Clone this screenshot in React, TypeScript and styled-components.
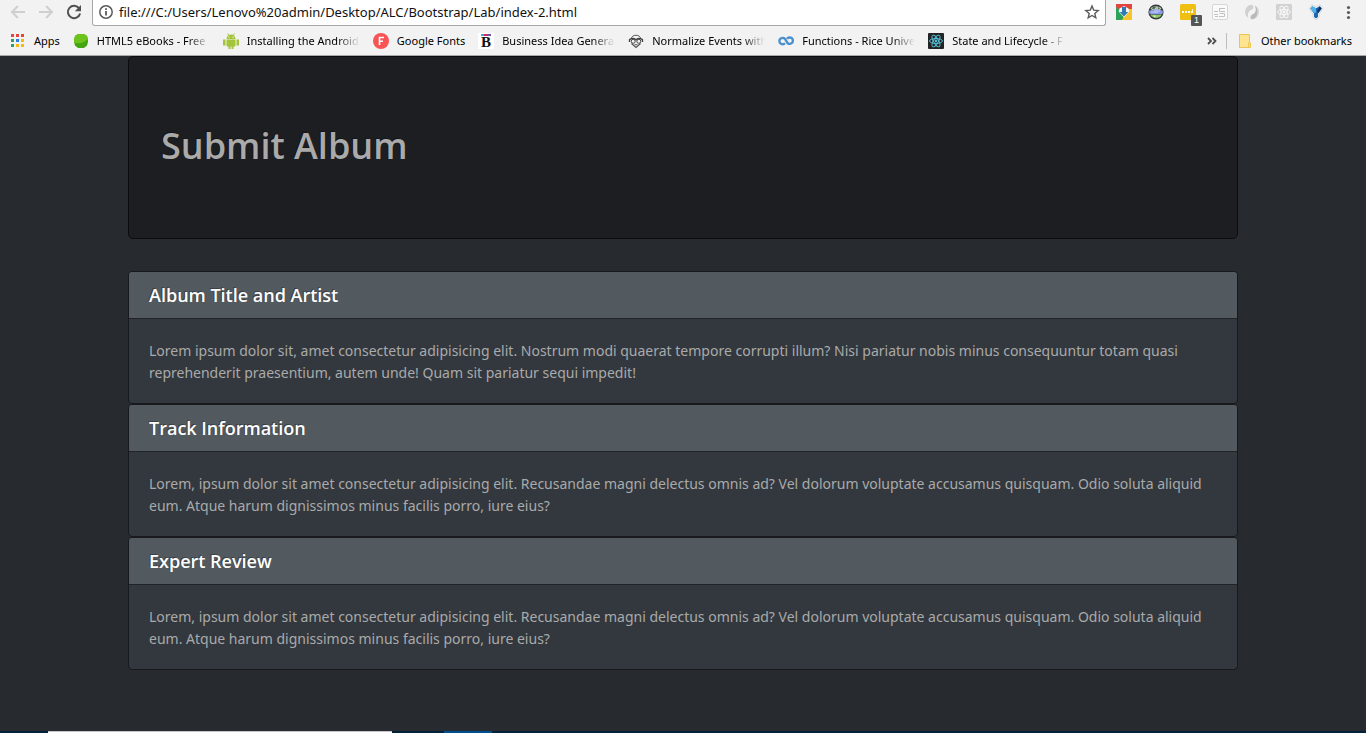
import React from "react";
import styled, { createGlobalStyle } from "styled-components";

const GlobalStyle = createGlobalStyle`
  *, *::before, *::after { box-sizing: border-box; }
  body {
    margin: 0;
    background: #272b30;
    font-family: "Open Sans", "Noto Sans", sans-serif;
  }
`;

const Screen = styled.div`
  display: flex;
  flex-direction: column;
  min-height: 100vh;
`;

const Chrome = styled.header`
  background: #f2f2f2;
  border-bottom: 1px solid #a8a8a8;
  font-family: "Noto Sans", "Open Sans", sans-serif;
`;

const Toolbar = styled.div`
  display: flex;
  align-items: flex-start;
  height: 26px;
  padding: 0 10px;
`;

const NavButtons = styled.div`
  display: flex;
  gap: 12px;
  padding-top: 4px;
  margin-right: 10px;
`;

const IconButton = styled.button`
  position: relative;
  display: block;
  flex: none;
  width: 16px;
  height: 16px;
  padding: 0;
  border: 0;
  background: none;

  svg { display: block; }
`;

const AddressBar = styled.div`
  display: flex;
  align-items: center;
  flex: 1;
  min-width: 0;
  height: 26px;
  padding: 0 5px 1px;
  background: #fff;
  border: 1px solid #a8a8a8;
  border-top: 0;
  border-radius: 0 0 3px 3px;
`;

const AddressInput = styled.input`
  flex: 1;
  min-width: 0;
  height: 20px;
  margin-left: 5px;
  padding: 0;
  border: 0;
  outline: 0;
  background: none;
  color: #111;
  font: 13px/20px "Noto Sans", "Open Sans", sans-serif;
`;

const Extensions = styled.div`
  display: flex;
  gap: 16px;
  padding-top: 4px;
  margin-left: 10px;
`;

const Badge = styled.span`
  position: absolute;
  top: 11px;
  left: 11px;
  width: 11px;
  height: 11px;
  border-radius: 1px;
  background: #555;
  color: #fff;
  font-size: 9px;
  line-height: 11px;
  text-align: center;
`;

const BookmarksBar = styled.nav`
  display: flex;
  align-items: center;
  height: 29px;
  padding: 0 14px 0 10px;
`;

const BookmarkList = styled.div`
  display: flex;
  flex: 1;
  gap: 13px;
  min-width: 0;
  overflow: hidden;
`;

const Bookmark = styled.a<{ $fade?: boolean }>`
  display: flex;
  flex: none;
  align-items: center;
  gap: 8px;
  color: #000;
  font-size: 11px;
  line-height: 18px;
  text-decoration: none;
  white-space: nowrap;

  svg { display: block; flex: none; }

  span {
    width: ${(p) => (p.$fade ? "113px" : "auto")};
    mask-image: ${(p) => (p.$fade ? "linear-gradient(to right, #000 80%, transparent)" : "none")};
  }
`;

const Divider = styled.i`
  width: 1px;
  height: 16px;
  margin: 0 10px 0 6px;
  background: #bdbdbd;
`;

const Container = styled.main`
  flex: 1;
  width: 100%;
  max-width: 1140px;
  margin: 0 auto;
  padding: 0 15px 32px;
`;

const Jumbotron = styled.section`
  margin-bottom: 32px;
  padding: 64px 32px;
  background: #1c1e22;
  border: 1px solid #0b0c0e;
  border-radius: 5px;
`;

const Title = styled.h1`
  margin: 0;
  padding: 1px 0 4px;
  color: #aaa;
  font-size: 36px;
  font-weight: 600;
  line-height: 48px;
  text-shadow: -1px -1px 0 rgba(0, 0, 0, 0.3);
`;

const Card = styled.article`
  overflow: hidden;
  background: #32383e;
  border: 1px solid #17191c;
  border-radius: 4px;
`;

const CardHeader = styled.h2`
  margin: 0;
  padding: 12px 20px;
  background: #52595f;
  border-bottom: 1px solid #202427;
  color: #fff;
  font-size: 18px;
  font-weight: 600;
  line-height: 22px;
  text-shadow: -1px -1px 0 rgba(0, 0, 0, 0.3);
`;

const CardText = styled.p`
  margin: 0;
  padding: 21px 20px 19px;
  color: #aaa;
  font-family: "Noto Sans", "Open Sans", sans-serif;
  font-size: 14px;
  line-height: 22px;
`;

const Taskbar = styled.footer`
  display: flex;
  height: 2px;
  background: #00233a;
`;

const TaskSegment = styled.div<{ $width: number; $color: string; $edge?: string }>`
  width: ${(p) => p.$width}px;
  background: ${(p) => p.$color};
  border-top: ${(p) => (p.$edge ? `1px solid ${p.$edge}` : "0")};
`;

const Svg = ({ children, size = 16 }: { children: React.ReactNode; size?: number }) => (
  <svg width={size} height={16} viewBox={`0 0 ${size} 16`} fill="none" aria-hidden="true">
    {children}
  </svg>
);

const Back = () => (
  <Svg><path d="M15 8H2.500M8 2L2 8l6 6" stroke="#cfcfcf" strokeWidth="2" /></Svg>
);
const Forward = () => (
  <Svg><path d="M1 8h12.500M8 2l6 6-6 6" stroke="#cfcfcf" strokeWidth="2" /></Svg>
);
const Reload = () => (
  <Svg>
    <path d="M13.200 4.400A6.200 6.200 0 1 0 14.100 9.500" stroke="#505050" strokeWidth="2" />
    <path d="M15 1v6.200H8.800z" fill="#505050" />
  </Svg>
);
const Info = () => (
  <Svg>
    <circle cx="8" cy="8" r="6.200" stroke="#5a5a5a" strokeWidth="1.500" />
    <path d="M8 7v4.500M8 4.200v1.800" stroke="#5a5a5a" strokeWidth="1.800" />
  </Svg>
);
const Star = () => (
  <Svg>
    <path d="M8 2l1.700 4.100 4.500.4-3.400 2.900 1 4.400L8 11.500l-3.800 2.300 1-4.400L1.800 6.500l4.500-.4z" stroke="#5a5a5a" strokeWidth="1.400" />
  </Svg>
);
const Dots = () => (
  <Svg>
    <g fill="#5a5a5a"><circle cx="8.500" cy="3.500" r="1.600" /><circle cx="8.500" cy="8.500" r="1.600" /><circle cx="8.500" cy="13.500" r="1.600" /></g>
  </Svg>
);
const Download = () => (
  <Svg>
    <path d="M0 0h16v6H0z" fill="#e2453c" />
    <path d="M0 3l8 6v7H0z" fill="#2da35a" />
    <path d="M16 5v11H6l6-11z" fill="#f7c52b" />
    <path d="M3.500 4.500L8 2l4.500 2.500.8 3L8 13.500 2.700 7.500z" fill="#f3f6f8" />
    <path d="M6 3h4v5h2.300L8 12.500 3.700 8H6z" fill="#2f7bb8" />
  </Svg>
);
const Globe = () => (
  <Svg>
    <circle cx="8" cy="8" r="7.600" fill="#34383a" />
    <path d="M2.500 4.500C5 1.500 11 1.500 13.500 4.500L12 6H4z" fill="#b9c6bd" />
    <path d="M5 2.800l3 .2-2 2.200-2-.5zM10 3l2 1.500-2 .8z" fill="#496a47" />
    <path d="M1.200 6.800c4-1.800 9.600-1.800 13.600 0v2.600c-4 1.500-9.600 1.500-13.600 0z" fill="#8b9ae6" />
    <path d="M3 8.200h7M6 7h6" stroke="#c9d2f5" strokeWidth=".9" />
    <path d="M2.300 10.200c3.500 1 8 1 11.400 0C12.500 15.200 4 15.200 2.300 10.200z" fill="#8cc765" />
    <path d="M5 11.500l3 .3-1.500 1.700z" fill="#e4f0dc" />
  </Svg>
);
const Notes = () => (
  <Svg>
    <rect width="16" height="16" rx="1.500" fill="#efbf14" />
    <path d="M2 7h2v2H2zM5 7h2v2H5zM8 7h2v2H8zM11 7h2v2h-2zM12.200 5H13v4h-.8z" fill="#fff" />
  </Svg>
);
const Article = () => (
  <Svg>
    <rect x=".5" y=".5" width="15" height="15" rx="1.500" fill="#fafafa" stroke="#d6d6d6" />
    <path d="M7 4.500h6M7.500 4.500v3H13M2 7.500h4M2 10.500h4M7.500 9.500h5v3H7M3 12.500h3" stroke="#c0c0c0" />
  </Svg>
);
const Swirl = () => (
  <Svg>
    <path d="M7.500.8A7.200 7.200 0 0 0 4.500 14C2.800 9.500 4.800 6.500 8 5.500c2-.7 2-3.500-.5-4.700z" fill="#d0d0d0" />
    <path d="M10.500 1.500A7.200 7.200 0 0 1 7 15.200c-1-2-.5-3.700 1.500-4.700C12 9 12.800 5 10.500 1.500z" fill="#b9b9b9" />
    <path d="M12 2.500A7.200 7.200 0 0 1 10 15c4-3 4.300-8 2-12.500z" fill="#dadada" />
  </Svg>
);
const Atom = ({ tile, line, radius = 1 }: { tile: string; line: string; radius?: number }) => (
  <Svg>
    <rect width="16" height="16" rx={radius} fill={tile} />
    <g stroke={line}>
      <ellipse cx="8" cy="8" rx="6.500" ry="2.500" />
      <ellipse cx="8" cy="8" rx="6.500" ry="2.500" transform="rotate(60 8 8)" />
      <ellipse cx="8" cy="8" rx="6.500" ry="2.500" transform="rotate(120 8 8)" />
    </g>
    <circle cx="8" cy="8" r="1.400" fill={line} />
  </Svg>
);
const BlueFork = () => (
  <Svg>
    <path d="M4 .8L1.200 4.500 5 10v3.500L8 15.800l3-2.300V10l3.800-5.500L12 .8 8 3z" fill="#fff" stroke="#d6d6d6" />
    <path d="M4.300 2.200L2.300 4.500 6 9.500v3.600L8 14.500l2-1.400V9.500l3.700-5-2-2.300L8 4.300z" fill="#1b68b3" />
    <path d="M4.300 2.200L2.300 4.500 6 9l2-.5V4.300z" fill="#4fb0ea" />
    <path d="M10 9.500l3.700-5-2-2.300L9 6.500z" fill="#0c386f" />
  </Svg>
);
const AppsGrid = () => (
  <Svg>
    {["#e8453c", "#e8453c", "#e8453c", "#2da35a", "#2f7de1", "#f5b912", "#2da35a", "#f5b912", "#f5b912"].map((c, i) => (
      <rect key={i} x={1 + (i % 3) * 5} y={1 + Math.floor(i / 3) * 5} width="3" height="3" fill={c} />
    ))}
  </Svg>
);
const GreenBall = () => (
  <Svg>
    <path d="M5 1h6l3 2 1 4v2l-1 3.500L11 15H5l-3-2.500L1 9V7l1-4z" fill="#43a510" />
    <path d="M5 1h6l3 2 1 3c-4 4-9 5-14 3.500V7L2 3z" fill="#6cc31c" />
  </Svg>
);
const Android = () => (
  <Svg>
    <path d="M3.500 6a4.500 4.500 0 0 1 9 0zM3.500 6.500h9v6.200a.8.8 0 0 1-.8.800H10.500V16h-2v-2.500h-1V16h-2v-2.500H4.300a.8.800 0 0 1-.8-.8zM0 6.500h2.500v6H0zM13.500 6.500H16v6h-2.500z" fill="#a4c439" />
    <path d="M4.500.5l1.500 2M11.500.5l-1.500 2" stroke="#a4c439" />
    <path d="M5.500 3.800h1v1h-1zM9.500 3.800h1v1h-1z" fill="#fff" />
  </Svg>
);
const GoogleFonts = () => (
  <Svg>
    <circle cx="8" cy="8" r="8" fill="#f95354" />
    <path d="M6.500 12V4.500H11M6.500 8.300H10" stroke="#fff" strokeWidth="1.600" />
  </Svg>
);
const SerifB = () => (
  <Svg>
    <rect width="16" height="16" fill="#fff" />
    <path d="M3 1h3v2H3z" fill="#29b5cf" /><path d="M6 1h4v2H6z" fill="#d6246c" /><path d="M10 1h3v2h-3z" fill="#6d55a5" />
    <text x="8" y="14" textAnchor="middle" fontFamily="Liberation Serif, serif" fontWeight="700" fontSize="15" fill="#111">B</text>
  </Svg>
);
const Face = () => (
  <Svg>
    <path d="M3.200 6C3.500 1 12.500 1 12.800 6" stroke="#555" />
    <path d="M3.500 10.500L8 14.500l4.500-4" stroke="#555" strokeWidth="1.200" />
    <path d="M1.500 9V6.500C4 5 6.500 5.500 8 6.800 9.500 5.500 12 5 14.500 6.500V9" stroke="#444" strokeWidth="1.300" />
    <circle cx="5.200" cy="8.300" r="2" stroke="#444" />
    <circle cx="10.800" cy="8.300" r="2" stroke="#444" />
    <path d="M6.500 11.700h3" stroke="#555" />
  </Svg>
);
const Infinity = () => (
  <Svg>
    <path d="M7 10.200A3.200 3.200 0 1 1 6.800 5.700L9.500 10A3.200 3.200 0 1 0 9 5.900" stroke="#4a90cf" strokeWidth="2.400" />
  </Svg>
);
const Folder = () => (
  <Svg>
    <path d="M2.500 1.500h10V10h1v4.500h-11z" fill="#fee391" stroke="#eac54f" />
    <path d="M11.500 14v-4h1" stroke="#eac54f" />
  </Svg>
);
const Chevrons = () => (
  <Svg><path d="M4 5l3 3-3 3M8.500 5l3 3-3 3" stroke="#505050" strokeWidth="1.800" /></Svg>
);

const bookmarks = [
  { label: "Apps", icon: <AppsGrid /> },
  { label: "HTML5 eBooks - Free", icon: <GreenBall />, fade: true },
  { label: "Installing the Android", icon: <Android />, fade: true },
  { label: "Google Fonts", icon: <GoogleFonts /> },
  { label: "Business Idea Genera", icon: <SerifB />, fade: true },
  { label: "Normalize Events with", icon: <Face />, fade: true },
  { label: "Functions - Rice Unive", icon: <Infinity />, fade: true },
  { label: "State and Lifecycle - F", icon: <Atom tile="#222" line="#53b9d1" />, fade: true },
];

const extensions = [
  { name: "Downloads", icon: <Download /> },
  { name: "Globe", icon: <Globe /> },
  { name: "Notes", icon: <Notes />, badge: "1" },
  { name: "Reader", icon: <Article /> },
  { name: "Swirl", icon: <Swirl /> },
  { name: "React tools", icon: <Atom tile="#d2d2d2" line="#f7f7f7" /> },
  { name: "Fork", icon: <BlueFork /> },
  { name: "Menu", icon: <Dots /> },
];

const cards = [
  {
    title: "Album Title and Artist",
    text: "Lorem ipsum dolor sit, amet consectetur adipisicing elit. Nostrum modi quaerat tempore corrupti illum? Nisi pariatur nobis minus consequuntur totam quasi reprehenderit praesentium, autem unde! Quam sit pariatur sequi impedit!",
  },
  {
    title: "Track Information",
    text: "Lorem, ipsum dolor sit amet consectetur adipisicing elit. Recusandae magni delectus omnis ad? Vel dolorum voluptate accusamus quisquam. Odio soluta aliquid eum. Atque harum dignissimos minus facilis porro, iure eius?",
  },
  {
    title: "Expert Review",
    text: "Lorem, ipsum dolor sit amet consectetur adipisicing elit. Recusandae magni delectus omnis ad? Vel dolorum voluptate accusamus quisquam. Odio soluta aliquid eum. Atque harum dignissimos minus facilis porro, iure eius?",
  },
];

export default function App() {
  return (
    <Screen>
      <GlobalStyle />
      <Chrome>
        <Toolbar>
          <NavButtons>
            <IconButton aria-label="Back"><Back /></IconButton>
            <IconButton aria-label="Forward"><Forward /></IconButton>
            <IconButton aria-label="Reload"><Reload /></IconButton>
          </NavButtons>
          <AddressBar>
            <IconButton aria-label="Site information"><Info /></IconButton>
            <AddressInput
              aria-label="Address"
              defaultValue="file:///C:/Users/Lenovo%20admin/Desktop/ALC/Bootstrap/Lab/index-2.html"
            />
            <IconButton aria-label="Bookmark this page"><Star /></IconButton>
          </AddressBar>
          <Extensions>
            {extensions.map((e) => (
              <IconButton key={e.name} aria-label={e.name}>
                {e.icon}
                {e.badge && <Badge>{e.badge}</Badge>}
              </IconButton>
            ))}
          </Extensions>
        </Toolbar>
        <BookmarksBar aria-label="Bookmarks">
          <BookmarkList>
            {bookmarks.map((b) => (
              <Bookmark key={b.label} href="#" $fade={b.fade}>
                {b.icon}
                <span>{b.label}</span>
              </Bookmark>
            ))}
          </BookmarkList>
          <IconButton aria-label="More bookmarks"><Chevrons /></IconButton>
          <Divider />
          <Bookmark href="#">
            <Folder />
            <span>Other bookmarks</span>
          </Bookmark>
        </BookmarksBar>
      </Chrome>
      <Container>
        <Jumbotron>
          <Title>Submit Album</Title>
        </Jumbotron>
        {cards.map((c) => (
          <Card key={c.title}>
            <CardHeader>{c.title}</CardHeader>
            <CardText>{c.text}</CardText>
          </Card>
        ))}
      </Container>
      <Taskbar>
        <TaskSegment $width={48} $color="#00233a" />
        <TaskSegment $width={344} $color="#fff" $edge="#c9c6cb" />
        <TaskSegment $width={52} $color="#00233a" />
        <TaskSegment $width={48} $color="#00508f" />
      </Taskbar>
    </Screen>
  );
}
